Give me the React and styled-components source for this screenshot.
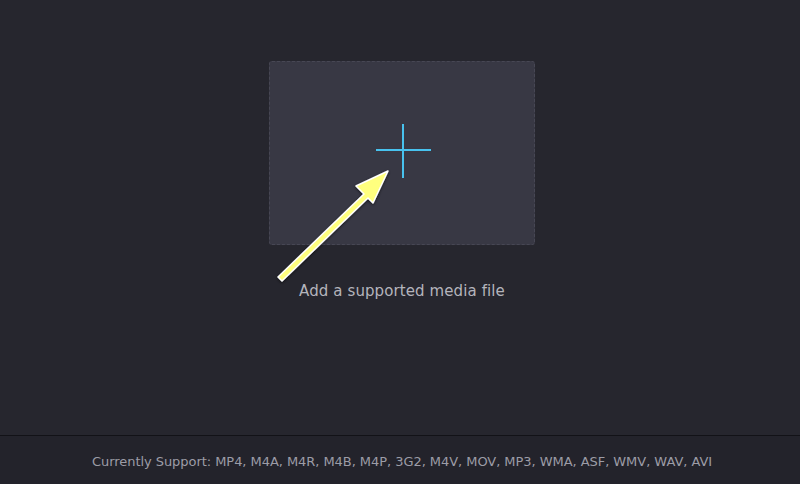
import React from "react"
import styled, { createGlobalStyle } from "styled-components"

const Global = createGlobalStyle`
    html, body {
        margin: 0;
        padding: 0;
        background: #26262e;
    }
    body {
        font-family: "DejaVu Sans", "Liberation Sans", sans-serif;
    }
`

const Page = styled.div`
    display: flex;
    flex-direction: column;
    width: 800px;
    height: 484px;
    background: #26262e;
    overflow: hidden;
`

const Main = styled.div`
    position: relative;
    flex: 1;
    display: flex;
    flex-direction: column;
    align-items: center;
    padding-top: 61px;
`

const DropZone = styled.div`
    width: 264px;
    height: 182px;
    margin-left: 4px;
    display: flex;
    align-items: center;
    justify-content: center;
    background: #383844;
    border: 1px dashed #474754;
    border-radius: 3px;
    cursor: pointer;
`

const PlusIcon = styled.svg`
    margin: -4px 0 0 2px;
`

const Hint = styled.div`
    margin-top: 37px;
    margin-left: 4px;
    font-size: 15px;
    color: #b4b4bc;
    letter-spacing: 0.1px;
`

const Pointer = styled.svg`
    position: absolute;
    left: 270px;
    top: 162px;
    overflow: visible;
`

const Footer = styled.div`
    height: 49px;
    border-top: 1px solid #121217;
    background: #23232b;
    display: flex;
    align-items: center;
    justify-content: center;
    font-size: 13px;
    color: #9c9ca6;
    padding: 2px 0 0 4px;
    box-sizing: border-box;
    letter-spacing: -0.05px;
`

const formats = ["MP4", "M4A", "M4R", "M4B", "M4P", "3G2", "M4V", "MOV", "MP3", "WMA", "ASF", "WMV", "WAV", "AVI"]

const App = () => {
    return (
        <Page>
            <Global />
            <Main>
                <DropZone>
                    <PlusIcon width="56" height="56" viewBox="0 0 56 56">
                        <path d="M28 1V55M1 27H56" stroke="#48c2ee" strokeWidth="2" fill="none" />
                    </PlusIcon>
                </DropZone>
                <Hint>Add a supported media file</Hint>
                <Pointer width="130" height="125" viewBox="0 0 130 125">
                    <defs>
                        <filter id="sh" x="-20%" y="-20%" width="140%" height="140%">
                            <feDropShadow dx="0" dy="1" stdDeviation="1.5" floodColor="#000" floodOpacity="0.6" />
                        </filter>
                    </defs>
                    <path
                        d="M8 115 L94 32 L86 24 L118 9 L103 41 L98 36 L12 119 Z"
                        fill="#ffff7e"
                        stroke="#ffffff"
                        strokeWidth="1.5"
                        strokeLinejoin="round"
                        filter="url(#sh)"
                    />
                </Pointer>
            </Main>
            <Footer>Currently Support: {formats.join(", ")}</Footer>
        </Page>
    )
}

export default App
